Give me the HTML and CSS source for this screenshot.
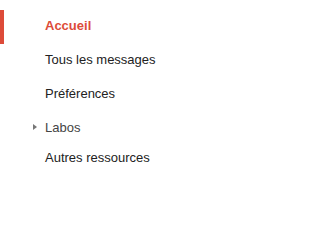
FILE: index.html
```html
<!DOCTYPE html>
<html lang="fr">
<head>
<meta charset="utf-8">
<link rel="stylesheet" href="styles.css">
</head>
<body>
<nav class="nav">
  <a class="item active" href="#">Accueil</a>
  <a class="item" href="#">Tous les messages</a>
  <a class="item" href="#">Préférences</a>
  <a class="item group" href="#"><span class="arrow"></span>Labos</a>
  <a class="item last" href="#">Autres ressources</a>
</nav>
</body>
</html>
```
FILE: styles.css
```css
html, body {
  margin: 0;
  padding: 0;
  background: #fff;
}
.nav {
  display: flex;
  flex-direction: column;
  padding-top: 10px;
  font-family: "Liberation Sans", Arial, sans-serif;
  font-size: 13px;
}
.item {
  display: block;
  position: relative;
  height: 34px;
  box-sizing: border-box;
  padding: 8px 0 10px 41px;
  line-height: 16px;
  color: #222;
  text-decoration: none;
  border-left: 4px solid transparent;
}
.item.active {
  color: #dd4b39;
  font-weight: bold;
  border-left-color: #dd4b39;
}
.item.group {
  color: #444;
}
.item.last {
  padding-top: 4px;
}
.arrow {
  position: absolute;
  left: 29px;
  top: 12px;
  width: 0;
  height: 0;
  border-top: 3px solid transparent;
  border-bottom: 3px solid transparent;
  border-left: 4px solid #777;
}
```
